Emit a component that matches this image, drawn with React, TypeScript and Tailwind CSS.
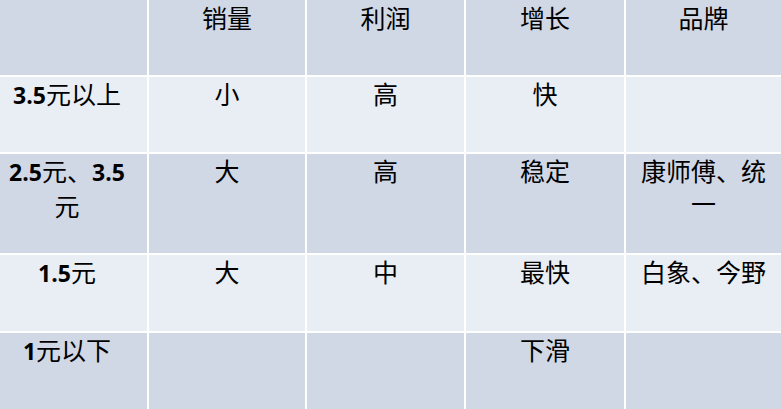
import React from 'react';

const dark = 'bg-[#d0d7e5]';
const light = 'bg-[#e9edf4]';

const cjk = { fontFamily: '"Noto Sans CJK SC", sans-serif' };

function Num({ children }: { children: React.ReactNode }) {
  return <span className="font-bold font-['Open_Sans'] text-[23px]">{children}</span>;
}

const rows: { head: React.ReactNode; cells: React.ReactNode[] }[] = [
  {
    head: <><Num>3.5</Num>元以上</>,
    cells: ['小', '高', '快', ''],
  },
  {
    head: <><Num>2.5</Num>元、<Num>3.5</Num><br />元</>,
    cells: ['大', '高', '稳定', <>康师傅、统<br />一</>],
  },
  {
    head: <><Num>1.5</Num>元</>,
    cells: ['大', '中', '最快', '白象、今野'],
  },
  {
    head: <><Num>1</Num>元以下</>,
    cells: ['', '', '下滑', ''],
  },
];

export default function App() {
  return (
    <div className="w-[781px] h-[409px] overflow-hidden bg-white">
      <div
        className="grid grid-cols-[147px_156px_157px_158px_1fr] grid-rows-[75px_75px_99px_76px_80px] gap-[2px] text-[25px] leading-[33px] text-black"
        style={cjk}
      >
        <div className={dark} />
        {['销量', '利润', '增长', '品牌'].map((h) => (
          <div key={h} className={`${dark} pt-[2px] leading-[31px] text-center`}>
            {h}
          </div>
        ))}
        {rows.map((r, i) => {
          const bg = i % 2 === 0 ? light : dark;
          return (
            <React.Fragment key={i}>
              <div className={`${bg} pr-[13px] text-center`}>{r.head}</div>
              {r.cells.map((c, j) => (
                <div key={j} className={`${bg} text-center`}>
                  {c}
                </div>
              ))}
            </React.Fragment>
          );
        })}
      </div>
    </div>
  );
}
